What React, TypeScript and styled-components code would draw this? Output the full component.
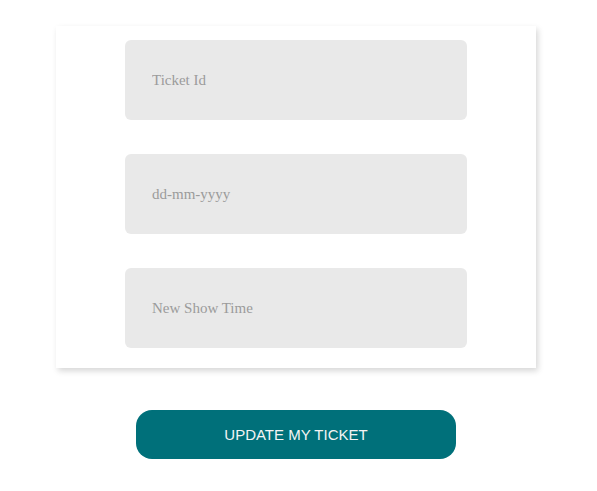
import React from "react";
import styled, { createGlobalStyle } from "styled-components";

const Global = createGlobalStyle`
  html, body { margin: 0; padding: 0; background: #fff; }
  body { font-family: "Liberation Serif", serif; }
`;

const Page = styled.div`
  width: 480px;
  margin-left: 56px;
  padding-top: 26px;
  display: flex;
  flex-direction: column;
  align-items: center;
`;

const Card = styled.form`
  width: 480px;
  box-sizing: border-box;
  background: #fff;
  box-shadow: 2px 3px 6px rgba(0, 0, 0, 0.16);
  padding: 14px 0 20px;
  display: flex;
  flex-direction: column;
  align-items: center;
  gap: 34px;
`;

const Field = styled.input`
  width: 342px;
  height: 80px;
  box-sizing: border-box;
  border: none;
  outline: none;
  border-radius: 6px;
  background: #e9e9e9;
  padding: 0 27px;
  font-family: "Liberation Serif", serif;
  font-size: 15px;
  color: #333;
  &::placeholder { color: #9b9b9b; }
`;

const Button = styled.button`
  margin-top: 42px;
  width: 320px;
  height: 49px;
  border: none;
  border-radius: 16px;
  background: #00707a;
  color: #f4f4f4;
  font-family: "Liberation Sans", Arial, sans-serif;
  font-size: 15px;
  text-transform: uppercase;
  cursor: pointer;
`;

export default function App() {
  return (
    <>
      <Global />
      <Page>
        <Card onSubmit={(e) => e.preventDefault()}>
          <Field placeholder="Ticket Id" />
          <Field placeholder="dd-mm-yyyy" />
          <Field placeholder="New Show Time" />
        </Card>
        <Button type="button">Update my ticket</Button>
      </Page>
    </>
  );
}
